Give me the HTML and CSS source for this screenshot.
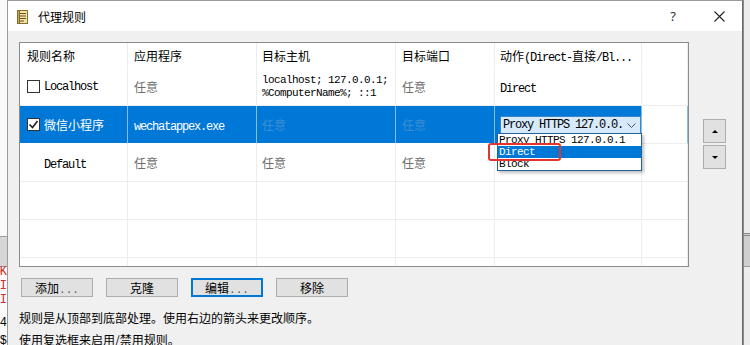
FILE: index.html
```html
<!DOCTYPE html>
<html lang="zh-CN">

<head>
	<meta charset="UTF-8">
	<meta name="viewport" content="width=device-width, initial-scale=1.0">
	<title>代理规则</title>
	<link rel="stylesheet" href="styles.css">
</head>

<body>
	<div class="backdrop">
		<div class="backdrop-bar"></div>
		<div class="log">
			<div class="log-line is-error">OK</div>
			<div class="log-line is-error">UI</div>
			<div class="log-line is-error">UI</div>
			<div class="log-line">:4</div>
			<div class="log-line">:$</div>
		</div>
	</div>

	<div class="dialog">
		<div class="titlebar">
			<svg class="title-icon" width="12" height="14" viewBox="0 0 12 14">
				<rect x="1.5" y="0.5" width="9" height="13" fill="#efe2a6" stroke="#8c6c2c" />
				<path d="M3 3.5h6M3 6h6M3 8.5h6M3 11h4" stroke="#6b5524" stroke-width="1" />
				<rect x="0.5" y="0.5" width="2" height="13" fill="#c9a75a" stroke="#8c6c2c" />
			</svg>
			<span class="title">代理规则</span>
			<span class="caption-btn caption-help">?</span>
			<span class="caption-btn">
				<svg width="11" height="11" viewBox="0 0 11 11">
					<path d="M0.5 0.5l10 10M10.5 0.5l-10 10" stroke="#222" stroke-width="1.1" />
				</svg>
			</span>
		</div>

		<div class="dialog-body">
			<div class="rules-area">
				<div class="rules">
					<table class="grid">
						<colgroup>
							<col style="width: 108px">
							<col style="width: 129px">
							<col style="width: 139px">
							<col style="width: 99px">
							<col style="width: 147px">
							<col>
						</colgroup>
						<tr class="grid-head">
							<td>规则名称</td>
							<td>应用程序</td>
							<td>目标主机</td>
							<td>目标端口</td>
							<td class="clip">动作<span class="m">(Direct-</span>直接<span class="m">/Bl...</span></td>
							<td></td>
						</tr>
						<tr>
							<td><span class="rule-name"><span class="check"></span><span class="m">Localhost</span></span></td>
							<td class="any">任意</td>
							<td><span class="m hosts">localhost; 127.0.0.1;<br>%ComputerName%; ::1</span></td>
							<td class="any">任意</td>
							<td><span class="m">Direct</span></td>
							<td></td>
						</tr>
						<tr class="is-selected">
							<td><span class="rule-name"><span class="check is-checked">
								<svg width="11" height="11" viewBox="0 0 11 11"><path d="M1.5 5.5l3 3 5-6.5" fill="none" stroke="#1e1e1e" stroke-width="1.6" /></svg>
							</span><span class="cjk-name">微信小程序</span></span></td>
							<td><span class="m">wechatappex.exe</span></td>
							<td class="any">任意</td>
							<td class="any">任意</td>
							<td class="combo-cell">
								<div class="combo">
									<span class="m">Proxy HTTPS 127.0.0.</span>
									<svg width="9" height="5" viewBox="0 0 9 5"><path d="M0.5 0.5l4 4 4-4" fill="none" stroke="#555" stroke-width="1" /></svg>
								</div>
							</td>
							<td class="plain"></td>
						</tr>
						<tr>
							<td><span class="m default-name">Default</span></td>
							<td class="any">任意</td>
							<td class="any">任意</td>
							<td class="any">任意</td>
							<td></td>
							<td></td>
						</tr>
						<tr><td></td><td></td><td></td><td></td><td></td><td></td></tr>
						<tr><td></td><td></td><td></td><td></td><td></td><td></td></tr>
						<tr><td></td><td></td><td></td><td></td><td></td><td></td></tr>
					</table>

					<ul class="combo-list">
						<li class="m">Proxy HTTPS 127.0.0.1</li>
						<li class="m is-active">Direct</li>
						<li class="m">Block</li>
					</ul>
					<div class="mark"></div>
				</div>

				<div class="order-btns">
					<button type="button" class="order-btn"><span class="tri tri-up"></span></button>
					<button type="button" class="order-btn"><span class="tri tri-down"></span></button>
				</div>
			</div>

			<div class="actions">
				<button type="button" class="btn">添加<span class="m dots">...</span></button>
				<button type="button" class="btn">克隆</button>
				<button type="button" class="btn is-focused">编辑<span class="m dots">...</span></button>
				<button type="button" class="btn">移除</button>
			</div>

			<p class="hint">规则是从顶部到底部处理。使用右边的箭头来更改顺序。</p>
			<p class="hint">使用复选框来启用/禁用规则。</p>
		</div>
	</div>

	<div class="backdrop backdrop-right">
		<div class="backdrop-bar"></div>
	</div>
</body>

</html>
```

FILE: styles.css
```css
*,
*::before,
*::after {
	box-sizing: border-box;
}

body {
	margin: 0;
	width: 750px;
	height: 345px;
	overflow: hidden;
	display: flex;
	background-color: #ffffff;
	font-family: "Noto Sans CJK SC", "Noto Sans", sans-serif;
	font-size: 12px;
	color: #000000;
}

.m {
	font-family: "Liberation Mono", "Noto Sans CJK SC", monospace;
	font-size: 12px;
	letter-spacing: -1.2px;
}

/* the app window behind the dialog */
.backdrop {
	width: 7px;
	flex: none;
	overflow: hidden;
	background-color: #fafafa;
	padding-top: 236px;
}

.backdrop-bar {
	height: 31px;
	border-top: 1px solid #9c9c9c;
	border-bottom: 1px solid #9c9c9c;
	background-color: #d6d6d6;
}

.backdrop-right {
	background-color: #ececec;
	border-left: 1px solid #8a8a8a;
	padding-top: 233px;
}

.backdrop-right .backdrop-bar {
	height: 34px;
	border-top: 3px double #8a8a8a;
	background-color: #cfcfcf;
}

.log {
	margin-top: -2px;
}

.log-line {
	display: flex;
	justify-content: flex-end;
	white-space: nowrap;
	font-family: "Liberation Mono", monospace;
	font-size: 12px;
	line-height: 14px;
}

.log-line.is-error {
	color: #d42b2b;
}

.log-line:nth-child(4) {
	margin-top: 5px;
	line-height: 22px;
}

/* dialog */
.dialog {
	width: 736px;
	flex: none;
	display: flex;
	flex-direction: column;
	background-color: #f0f0f0;
	border: 1px solid #9a9a9a;
	border-right-color: #6a6a6a;
	border-bottom: none;
}

.titlebar {
	height: 30px;
	flex: none;
	display: flex;
	align-items: center;
	background-color: #ffffff;
	padding-left: 9px;
}

.title-icon {
	flex: none;
	margin-top: 1px;
}

.title {
	margin-left: 9px;
	flex: 1;
}

.caption-btn {
	width: 46px;
	height: 30px;
	display: flex;
	align-items: center;
	justify-content: center;
}

.caption-help {
	font-family: "Noto Sans", sans-serif;
	font-size: 13px;
	color: #333333;
}

.dialog-body {
	padding: 11px 0 0 11px;
}

.rules-area {
	display: flex;
	gap: 14px;
}

.rules {
	position: relative;
	width: 670px;
	height: 225px;
	overflow: hidden;
	background-color: #ffffff;
	border: 1px solid #8c8c8c;
}

.grid {
	width: 668px;
	table-layout: fixed;
	border-collapse: separate;
	border-spacing: 0;
	font-size: 12px;
}

.grid td {
	height: 38px;
	padding: 0 0 0 6px;
	border-right: 1px solid #ededed;
	border-bottom: 1px solid #ededed;
	white-space: nowrap;
	overflow: hidden;
	vertical-align: middle;
}

.grid-head td {
	height: 25px;
	padding-top: 1px;
	border-bottom-color: #ffffff;
}

.grid td:first-child {
	padding-left: 7px;
}

.grid td:nth-child(3),
.grid td:nth-child(5) {
	padding-left: 5px;
}

.clip {
	text-overflow: clip;
}

.rule-name {
	display: flex;
	align-items: center;
	gap: 4px;
}

.check {
	width: 13px;
	height: 13px;
	flex: none;
	border: 1px solid #333333;
	background-color: #ffffff;
	display: flex;
	align-items: center;
	justify-content: center;
}

.default-name {
	padding-left: 17px;
}

.grid .hosts {
	display: block;
	font-size: 11px;
	letter-spacing: -0.6px;
	line-height: 13px;
	padding-top: 1px;
}

.any {
	color: #6d6d6d;
}

.is-selected td {
	background-color: #0078d7;
	color: #ffffff;
	border-right-color: #86bde9;
	border-bottom-color: #ffffff;
}

.is-selected .any {
	color: #3f8ed3;
}

.is-selected .plain {
	background-color: #ffffff;
	border-bottom-color: #ededed;
}

.cjk-name {
	font-size: 12px;
}

.grid .combo-cell {
	padding: 1px 0 0 1px;
}

.combo {
	height: 19px;
	display: flex;
	align-items: center;
	justify-content: space-between;
	padding: 0 4px 0 2px;
	background-color: #d6eafb;
	border: 1px solid #3c86c8;
	color: #000000;
}

/* open dropdown of the combo box */
.combo-list {
	position: absolute;
	left: 477px;
	top: 90px;
	width: 145px;
	margin: 0;
	padding: 0;
	list-style: none;
	background-color: #ffffff;
	border: 1px solid #24629b;
	box-shadow: 2px 2px 3px #00000040;
}

.combo-list li {
	height: 12px;
	font-size: 11px;
	letter-spacing: -0.6px;
	line-height: 12px;
	padding-left: 1px;
	white-space: nowrap;
}

.combo-list .is-active {
	background-color: #0078d7;
	color: #ffffff;
}

/* red highlight drawn over the screenshot */
.mark {
	position: absolute;
	left: 468px;
	top: 100px;
	width: 73px;
	height: 18px;
	border: 2px solid #e3342f;
	border-radius: 3px;
}

.order-btns {
	display: flex;
	flex-direction: column;
	gap: 2px;
	margin-top: 77px;
}

.order-btn {
	width: 23px;
	height: 24px;
	padding: 0;
	display: flex;
	align-items: center;
	justify-content: center;
	background-color: #e1e1e1;
	border: 1px solid #adadad;
}

.tri {
	width: 0;
	height: 0;
	border-left: 3px solid transparent;
	border-right: 3px solid transparent;
}

.tri-up {
	border-bottom: 3px solid #000000;
}

.tri-down {
	border-top: 3px solid #000000;
}

.actions {
	display: flex;
	gap: 13px;
	margin: 11px 0 0 2px;
}

.btn {
	width: 72px;
	height: 19px;
	padding: 0;
	font-family: "Noto Sans CJK SC", sans-serif;
	font-size: 12px;
	line-height: 17px;
	color: #000000;
	background-color: #e1e1e1;
	border: 1px solid #adadad;
}

.btn.is-focused {
	border: 2px solid #0078d7;
	line-height: 15px;
}

.dots {
	font-size: 11px;
	letter-spacing: 0;
	color: #555555;
}

.hint {
	margin: 0;
	line-height: 22px;
}

.actions + .hint {
	margin-top: 10px;
}
```
